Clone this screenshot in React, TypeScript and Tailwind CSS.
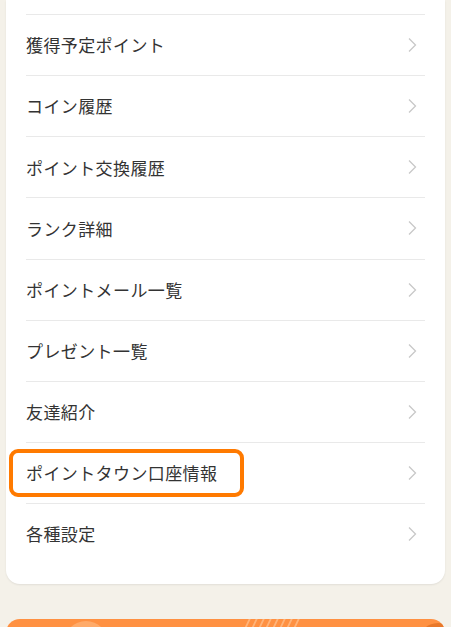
import { ReactNode } from 'react'

const items = [
  '獲得予定ポイント',
  'コイン履歴',
  'ポイント交換履歴',
  'ランク詳細',
  'ポイントメール一覧',
  'プレゼント一覧',
  '友達紹介',
  'ポイントタウン口座情報',
  '各種設定',
]

function Chevron() {
  return (
    <svg width="10" height="16" viewBox="0 0 10 16" className="shrink-0">
      <polyline points="2,1.5 8.5,8 2,14.5" fill="none" stroke="#c8c8c8" strokeWidth="1.3" />
    </svg>
  )
}

function MenuRow({ label, highlight }: { label: string; highlight?: boolean }): ReactNode {
  return (
    <div className="relative mx-5 flex h-[61.125px] items-center justify-between border-t border-[#e9e9e9] pr-[8px]">
      <span className="text-[17px] tracking-[0.4px] text-[#333333]">{label}</span>
      <Chevron />
      {/* orange annotation frame */}
      {highlight && (
        <div className="pointer-events-none absolute -left-[17px] top-[6px] h-[48px] w-[235px] rounded-[9px] border-4 border-[#ff7a00]" />
      )}
    </div>
  )
}

export default function App() {
  return (
    <div
      className="h-[627px] w-[451px] overflow-hidden bg-[#f4f1e9] px-[6px]"
      style={{ fontFamily: '"Noto Sans CJK JP", "Noto Sans", sans-serif' }}
    >
      {/* menu card, top scrolled out of view */}
      <div className="rounded-b-[14px] bg-white pt-[14px] pb-[20px] shadow-[0_1px_2px_rgba(0,0,0,0.08)]">
        {items.map((label) => (
          <MenuRow key={label} label={label} highlight={label === 'ポイントタウン口座情報'} />
        ))}
      </div>

      {/* orange banner peeking in */}
      <div className="relative mt-[35px] h-[40px] overflow-hidden rounded-t-[14px] bg-[#ff9142]">
        <div className="absolute left-[58px] top-[2px] h-[44px] w-[44px] rounded-full bg-[#ffab6a]" />
        <div className="absolute left-[238px] top-0 flex h-[20px] gap-[5px]">
          {[0, 1, 2, 3, 4, 5, 6, 7].map((i) => (
            <div key={i} className="h-[20px] w-[2px] skew-x-[-25deg] bg-[#ffb47a]" />
          ))}
        </div>
        <div className="absolute left-[412px] top-[4px] h-[40px] w-[40px] rounded-full bg-[#e8782a]" />
      </div>
    </div>
  )
}
